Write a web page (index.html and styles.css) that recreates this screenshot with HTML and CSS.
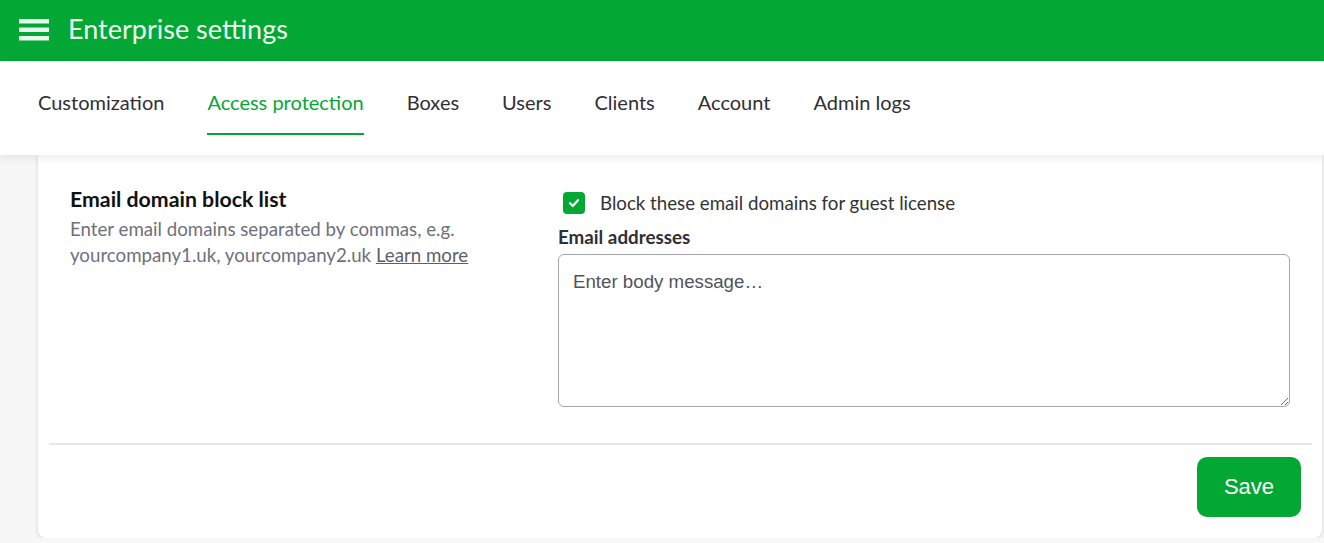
FILE: index.html
```html
<!DOCTYPE html>
<html lang="en">
<head>
    <meta charset="UTF-8">
    <meta name="viewport" content="width=device-width, initial-scale=1.0">
    <title>Enterprise settings</title>
    <link rel="stylesheet" href="styles.css">
</head>
<body>
    <header class="top-bar">
        <svg class="menu-icon" width="30" height="22" viewBox="0 0 30 22">
            <rect x="0" y="0" width="30" height="4.5" fill="#e8f8ec"/>
            <rect x="0" y="8.5" width="30" height="4.5" fill="#e8f8ec"/>
            <rect x="0" y="17" width="30" height="4.5" fill="#e8f8ec"/>
        </svg>
        <h1 class="page-title">Enterprise settings</h1>
    </header>
    <nav class="tabs">
        <a class="tab">Customization</a>
        <a class="tab active">Access protection</a>
        <a class="tab">Boxes</a>
        <a class="tab">Users</a>
        <a class="tab">Clients</a>
        <a class="tab">Account</a>
        <a class="tab">Admin logs</a>
    </nav>
    <main class="card">
        <section class="setting-row">
            <div class="setting-info">
                <h2 class="setting-title">Email domain block list</h2>
                <p class="setting-desc">Enter email domains separated by commas, e.g. yourcompany1.uk, yourcompany2.uk <a class="learn-more">Learn more</a></p>
            </div>
            <div class="setting-controls">
                <label class="checkbox-row">
                    <span class="checkbox">
                        <svg width="14" height="14" viewBox="0 0 14 14">
                            <path d="M3 7.2 L5.8 10 L11 4.2" fill="none" stroke="#fff" stroke-width="2.2" stroke-linecap="round" stroke-linejoin="round"/>
                        </svg>
                    </span>
                    Block these email domains for guest license
                </label>
                <label class="field-label" for="emails">Email addresses</label>
                <textarea id="emails" placeholder="Enter body message…"></textarea>
            </div>
        </section>
        <footer class="card-footer">
            <button class="save-button">Save</button>
        </footer>
    </main>
</body>
</html>
```

FILE: styles.css
```css
body {
    margin: 0;
    background-color: #f7f7f7;
    font-family: Lato, "Noto Sans", sans-serif;
    color: #333;
}
.top-bar {
    display: flex;
    align-items: center;
    height: 61px;
    padding-left: 19px;
    background-color: #02a833;
}
.menu-icon {
    margin-right: 19px;
    margin-bottom: 2px;
}
.page-title {
    margin: 0 0 4px;
    font-size: 27px;
    font-weight: 400;
    color: #eefbf1;
}
.tabs {
    position: relative;
    z-index: 2;
    display: flex;
    gap: 43px;
    height: 94px;
    padding: 0 38px;
    background-color: #fff;
    box-shadow: 0 4px 8px rgba(0, 0, 0, 0.07);
}
.tab {
    padding-top: 29px;
    padding-bottom: 19px;
    height: 24px;
    line-height: 24px;
    font-size: 20px;
    color: #2f2f35;
    border-bottom: 2px solid transparent;
    cursor: pointer;
}
.tab.active {
    color: #02a833;
    border-bottom-color: #02a833;
}
.card {
    position: relative;
    z-index: 1;
    margin: 0 2px 0 38px;
    background-color: #fff;
    border-radius: 0 0 8px 8px;
    box-shadow: 0 1px 4px rgba(0, 0, 0, 0.15);
}
.setting-row {
    display: grid;
    grid-template-columns: 2fr 3fr;
    padding: 32px 32px 36px;
}
.setting-title {
    margin: 0;
    font-size: 21.3px;
    line-height: 25px;
    font-weight: 700;
    color: #111;
}
.setting-desc {
    margin: 4px 0 0;
    font-size: 18.7px;
    line-height: 26px;
    color: #6d717b;
}
.learn-more {
    color: #5b5f69;
    text-decoration: underline;
    cursor: pointer;
}
.checkbox-row {
    display: flex;
    align-items: center;
    gap: 15px;
    margin-top: 4px;
    padding-left: 5px;
    font-size: 18.7px;
    line-height: 24px;
    color: #333;
}
.checkbox {
    display: flex;
    align-items: center;
    justify-content: center;
    width: 22px;
    height: 22px;
    border-radius: 4px;
    background-color: #02a833;
}
.field-label {
    display: block;
    margin-top: 10px;
    margin-bottom: 6px;
    font-size: 18.8px;
    line-height: 23px;
    font-weight: 700;
    color: #2f2f35;
}
textarea {
    display: block;
    box-sizing: border-box;
    width: 100%;
    height: 153px;
    padding: 16px 14px;
    border: 1px solid #a2a5af;
    border-radius: 6px;
    font-family: "Liberation Sans", Arial, sans-serif;
    font-size: 18.7px;
    color: #333;
}
textarea::placeholder {
    color: #50545c;
}
.card-footer {
    display: flex;
    justify-content: flex-end;
    margin: 0 10px 0 11px;
    padding: 12px 11px 21px;
    border-top: 2px solid #e6e6ea;
}
.save-button {
    width: 104px;
    height: 60px;
    border: none;
    border-radius: 10px;
    background-color: #02a833;
    color: #fff;
    font-family: "Liberation Sans", Arial, sans-serif;
    font-size: 22px;
    cursor: pointer;
}
```
